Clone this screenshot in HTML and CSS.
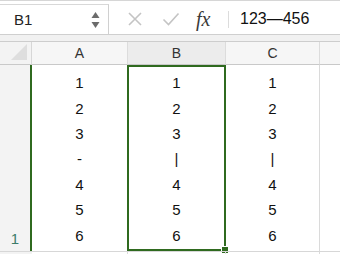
FILE: index.html
```html
<!DOCTYPE html>
<html lang="en">
<head>
    <meta charset="UTF-8">
    <title>Sheet</title>
    <link rel="stylesheet" href="styles.css">
</head>
<body>
    <div class="formula-bar">
        <div class="name-box">
            <span class="cell-ref">B1</span>
            <span class="spinner">
                <svg width="9" height="18" viewBox="0 0 9 18">
                    <path d="M4.5 1 L8.5 7 L0.5 7 Z" fill="#6b6b6b"/>
                    <path d="M4.5 17 L8.5 11 L0.5 11 Z" fill="#6b6b6b"/>
                </svg>
            </span>
        </div>
        <div class="bar-tools">
            <svg class="tool" width="16" height="16" viewBox="0 0 16 16">
                <path d="M2 2 L14 14 M14 2 L2 14" stroke="#c4c4c4" stroke-width="1.6" fill="none"/>
            </svg>
            <svg class="tool" width="18" height="16" viewBox="0 0 18 16">
                <path d="M1.5 8.5 L6.5 13.5 L16.5 2.5" stroke="#c4c4c4" stroke-width="1.6" fill="none"/>
            </svg>
            <span class="fx">fx</span>
        </div>
        <div class="formula">123—456</div>
    </div>
    <div class="band"></div>
    <div class="sheet">
        <div class="corner"><span class="corner-tri"></span></div>
        <div class="col-head">A</div>
        <div class="col-head selected">B</div>
        <div class="col-head">C</div>
        <div class="col-head last"></div>

        <div class="row-head">1</div>
        <div class="cell">1<br>2<br>3<br>-<br>4<br>5<br>6</div>
        <div class="cell active">1<br>2<br>3<br>|<br>4<br>5<br>6<span class="handle"></span></div>
        <div class="cell">1<br>2<br>3<br>|<br>4<br>5<br>6</div>
        <div class="cell last"></div>

        <div class="row-head tail"></div>
        <div class="cell tail"></div>
        <div class="cell tail"></div>
        <div class="cell tail"></div>
        <div class="cell tail last"></div>
    </div>
</body>
</html>
```

FILE: styles.css
```css
body {
    margin: 0;
    width: 340px;
    height: 254px;
    overflow: hidden;
    font-family: "Liberation Sans", Arial, sans-serif;
    background: #ffffff;
    color: #1a1a1a;
}
.formula-bar {
    display: flex;
    align-items: stretch;
    height: 30px;
    padding-top: 3px;
    background: #ffffff;
    border-top: 1px solid #d6d6d6;
    border-bottom: 1px solid #cfcfcf;
    box-sizing: content-box;
}
.name-box {
    width: 109px;
    display: flex;
    align-items: center;
    justify-content: space-between;
    padding: 0 8px 0 14px;
    box-sizing: border-box;
    border-right: 1px solid #d0d0d0;
    border-top: 1px solid #d8d8d8;
}
.cell-ref {
    font-size: 15px;
    color: #222;
}
.spinner {
    display: flex;
}
.bar-tools {
    display: flex;
    align-items: center;
    width: 120px;
    padding-left: 18px;
    gap: 19px;
    box-sizing: border-box;
    position: relative;
}
.bar-tools::after {
    content: "";
    position: absolute;
    right: 0;
    top: 7px;
    bottom: 6px;
    border-right: 1px solid #dcdcdc;
}
.fx {
    font-family: "Liberation Serif", serif;
    font-style: italic;
    font-size: 20px;
    color: #3a3a3a;
    margin-left: -3px;
}
.formula {
    display: flex;
    align-items: center;
    padding-left: 11px;
    font-size: 16px;
    color: #111;
}
.band {
    height: 6px;
    background: #f1f1f1;
    border-bottom: 1px solid #cdcdcd;
}
.sheet {
    display: grid;
    grid-template-columns: 32px 96px 98px 94px 1fr;
    grid-template-rows: 23px 186px 6px;
}
.corner {
    background: #f3f3f3;
    border-right: 1px solid #d7d7d7;
    border-bottom: 1px solid #c9c9c9;
    position: relative;
}
.corner-tri {
    position: absolute;
    right: 4px;
    bottom: 4px;
    width: 0;
    height: 0;
    border-left: 16px solid transparent;
    border-bottom: 16px solid #dedede;
}
.col-head {
    background: #f6f6f6;
    border-right: 1px solid #dcdcdc;
    border-bottom: 1px solid #c9c9c9;
    display: flex;
    align-items: center;
    justify-content: center;
    font-size: 14px;
    color: #333;
}
.col-head.selected {
    background: #ececec;
}
.col-head.last {
    border-right: none;
}
.row-head {
    background: #f3f3f3;
    border-right: 2px solid #2f6a1f;
    display: flex;
    align-items: flex-end;
    justify-content: center;
    padding-bottom: 4px;
    font-size: 15px;
    color: #3c7c6a;
}
.row-head.tail {
    border-right: none;
    border-top: 1px solid #d7d7d7;
    background: #f3f3f3;
}
.cell {
    border-right: 1px solid #dadada;
    display: flex;
    flex-direction: column;
    justify-content: flex-end;
    text-align: center;
    font-size: 15px;
    line-height: 25.4px;
    padding-bottom: 3px;
    color: #111;
    position: relative;
}
.cell.active {
    border: 2px solid #2f6a1f;
    margin-left: -1px;
    padding-bottom: 1px;
}
.cell.last {
    border-right: none;
}
.cell.tail {
    border-top: 1px solid #d7d7d7;
}
.handle {
    position: absolute;
    right: -5px;
    bottom: -5px;
    width: 6px;
    height: 6px;
    background: #2f6a1f;
    border: 1px solid #ffffff;
}
```
